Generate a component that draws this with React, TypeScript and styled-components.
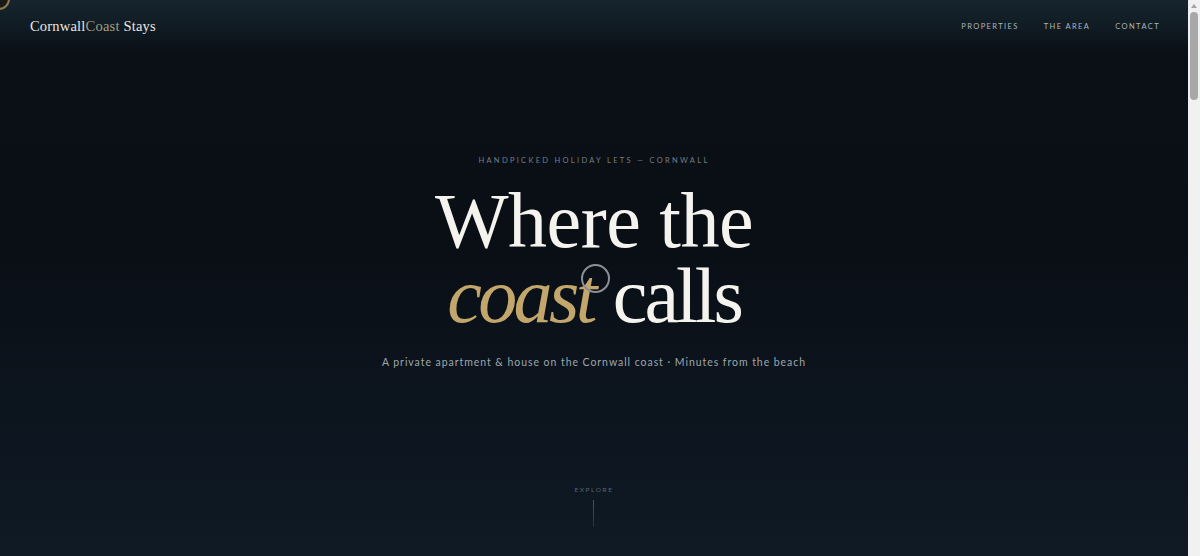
import React from 'react';
import styled, { createGlobalStyle } from 'styled-components';

const GlobalStyle = createGlobalStyle`
  html, body {
    margin: 0;
    padding: 0;
    background: #0b1118;
    overflow: hidden;
  }
  * {
    box-sizing: border-box;
  }
`;

const navLinks = ['Properties', 'The Area', 'Contact'];

const App = () => (
  <>
    <GlobalStyle />
    <Page>
      <Hero>
        <Header>
          <Logo>
            Cornwall<LogoAccent>Coast</LogoAccent> Stays
          </Logo>
          <Nav>
            {navLinks.map(link => (
              <NavLink key={link} href="#">
                {link}
              </NavLink>
            ))}
          </Nav>
        </Header>
        <HeroBody>
          <Eyebrow>Handpicked holiday lets — Cornwall</Eyebrow>
          <Headline>
            <HeadLine>Where the</HeadLine>
            <HeadLine>
              <Accent>coast</Accent> <Tight>calls</Tight>
            </HeadLine>
          </Headline>
          <Subtitle>
            A private apartment &amp; house on the Cornwall coast · Minutes from the beach
          </Subtitle>
          <Explore>
            <ExploreLabel>Explore</ExploreLabel>
            <ExploreLine />
          </Explore>
        </HeroBody>
      </Hero>
      <Scrollbar>
        <ScrollArrow />
        <ScrollThumb />
      </Scrollbar>
      <CursorDot />
      <CursorRing />
    </Page>
  </>
);

const Page = styled.div`
  position: relative;
  display: flex;
  height: 100vh;
  font-family: 'Lato', 'Liberation Sans', sans-serif;
  color: #fff;
`;

const Hero = styled.section`
  flex: 1;
  display: flex;
  flex-direction: column;
  background: linear-gradient(
    180deg,
    #0a1017 0%,
    #0a0f16 45%,
    #0d1620 80%,
    #0f1a24 100%
  );
`;

const Header = styled.header`
  height: 52px;
  display: flex;
  align-items: center;
  justify-content: space-between;
  padding: 0 28px 0 30px;
  background: linear-gradient(180deg, #16242d 0%, #111d25 45%, rgba(10, 16, 23, 0) 100%);
`;

const Logo = styled.div`
  font-family: 'Liberation Serif', 'DejaVu Serif', serif;
  font-size: 14.5px;
  letter-spacing: 0.2px;
  color: #ebe8e1;
`;

const LogoAccent = styled.span`
  color: #a89e80;
`;

const Nav = styled.nav`
  display: flex;
  gap: 25px;
`;

const NavLink = styled.a`
  font-size: 7.5px;
  letter-spacing: 1.4px;
  text-transform: uppercase;
  text-decoration: none;
  color: #aeb4ba;
`;

const HeroBody = styled.main`
  flex: 1;
  display: flex;
  flex-direction: column;
  align-items: center;
  padding-top: 103px;
  text-align: center;
`;

const Eyebrow = styled.p`
  margin: 0;
  font-size: 7.5px;
  line-height: 12px;
  letter-spacing: 2.3px;
  text-transform: uppercase;
  color: #767c83;
`;

const Headline = styled.h1`
  margin: 16px 0 0;
  display: flex;
  flex-direction: column;
  font-family: 'Liberation Serif', 'DejaVu Serif', serif;
  font-weight: 400;
  font-size: 78px;
  line-height: 75px;
  letter-spacing: -0.5px;
  color: #f5f3ee;
`;

const HeadLine = styled.span`
  display: block;
  height: 75px;
  overflow: visible;
`;

const Accent = styled.em`
  font-style: italic;
  letter-spacing: -3.6px;
  color: #c3a66c;
`;

const Tight = styled.span`
  letter-spacing: -3px;
`;

const Subtitle = styled.p`
  margin: 21px 0 0;
  font-size: 10.5px;
  line-height: 16px;
  letter-spacing: 0.95px;
  color: #9ea6ad;
`;

const Explore = styled.div`
  margin-top: auto;
  padding-bottom: 29px;
  display: flex;
  flex-direction: column;
  align-items: center;
  gap: 5px;
`;

const ExploreLabel = styled.span`
  font-size: 6.5px;
  line-height: 10px;
  letter-spacing: 1.6px;
  text-transform: uppercase;
  color: #5b636c;
`;

const ExploreLine = styled.span`
  width: 1px;
  height: 27px;
  background: linear-gradient(180deg, #4a5561 0%, #26313c 100%);
`;

const Scrollbar = styled.aside`
  width: 12px;
  flex-shrink: 0;
  display: flex;
  flex-direction: column;
  align-items: center;
  background: #f1f1f1;
  padding: 4px 0;
  gap: 4px;
`;

const ScrollArrow = styled.span`
  width: 0;
  height: 0;
  border-left: 3px solid transparent;
  border-right: 3px solid transparent;
  border-bottom: 4px solid #a3a3a3;
`;

const ScrollThumb = styled.span`
  width: 8px;
  height: 88px;
  border-radius: 4px;
  background: #a8a8a8;
`;

const CursorDot = styled.div`
  position: fixed;
  top: -12px;
  left: -12px;
  width: 22px;
  height: 22px;
  border-radius: 50%;
  border: 2px solid #8c7a4e;
  background: #1a1a16;
`;

const CursorRing = styled.div`
  position: fixed;
  top: 264px;
  left: 581px;
  width: 29px;
  height: 29px;
  border-radius: 50%;
  border: 2px solid #8b9097;
`;

export default App;
